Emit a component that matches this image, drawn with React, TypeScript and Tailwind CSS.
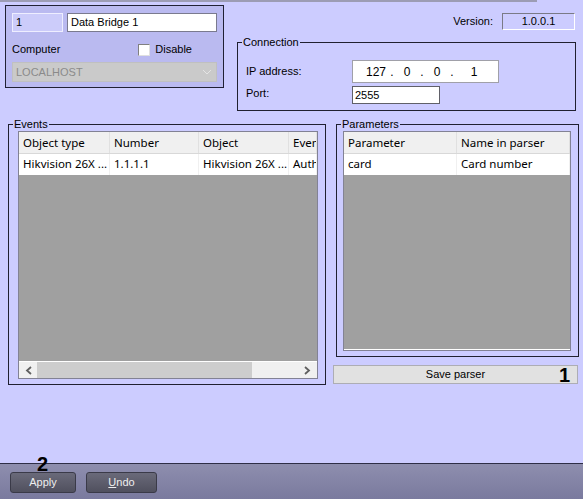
import React from "react";

const font = { fontFamily: '"Liberation Sans", Arial, sans-serif' };
const tableFont = { fontFamily: '"Noto Sans", "Open Sans", sans-serif' };

function Legend({ children }: { children: React.ReactNode }) {
  return (
    <span className="absolute -top-[8px] left-[4px] bg-[#ccccff] px-[1px] text-[11px] leading-[14px] text-black">
      {children}
    </span>
  );
}

function Chevron({ dir }: { dir: "left" | "right" }) {
  return (
    <svg width="8" height="9" viewBox="0 0 8 9" className="shrink-0">
      <polyline
        points={dir === "left" ? "6,1 2,4.5 6,8" : "2,1 6,4.5 2,8"}
        fill="none"
        stroke="#606060"
        strokeWidth="1.8"
      />
    </svg>
  );
}

function Grid({
  cols,
  header,
  row,
  scroll,
}: {
  cols: string[];
  header: string[];
  row: string[];
  scroll?: boolean;
}) {
  return (
    <div className="flex h-full flex-col border border-[#828294] bg-[#a0a0a0]" style={tableFont}>
      <div className="flex h-[22px] shrink-0 border-b border-[#d8d8d8] bg-[#f0f0f0]">
        {header.map((h, i) => (
          <div
            key={h}
            className={`${cols[i]} overflow-hidden whitespace-nowrap border-r border-[#e0e0e0] pl-[4px] text-[11.5px] leading-[21px] text-black`}
          >
            {h}
          </div>
        ))}
      </div>
      <div className="flex h-[21px] shrink-0 bg-white">
        {row.map((c, i) => (
          <div
            key={i}
            className={`${cols[i]} overflow-hidden whitespace-nowrap border-r border-[#f0f0f0] pl-[4px] text-[11.5px] leading-[20px] text-black`}
          >
            {c}
          </div>
        ))}
      </div>
      <div className="flex-1" />
      {scroll && (
        <div className="flex h-[17px] shrink-0 items-center border-t border-white bg-[#f0f0f0] px-[6px]">
          <Chevron dir="left" />
          <div className="ml-[4px] h-[16px] w-[215px] bg-[#cdcdcd]" />
          <div className="flex-1" />
          <Chevron dir="right" />
        </div>
      )}
      {!scroll && <div className="h-[1px] shrink-0 bg-white" />}
    </div>
  );
}

function Btn({ children }: { children: React.ReactNode }) {
  return (
    <div className="flex h-[21px] items-center justify-center rounded-[3px] border border-[#3a3a48] bg-gradient-to-b from-[#6a6a7a] to-[#50505e] text-[11px] text-[#eeeeee]">
      {children}
    </div>
  );
}

export default function App() {
  return (
    <div className="relative flex h-[499px] w-[583px] flex-col overflow-hidden bg-[#ccccff] text-black" style={font}>
      <div className="h-[2px] w-[537px] shrink-0 bg-[#9c9cb4]" />

      {/* top row */}
      <div className="mt-[3px] flex shrink-0 pl-[5px]">
        <div className="h-[83px] w-[219px] border border-[#202034] bg-[#babaf0] px-[6px] pt-[7px]">
          <div className="flex gap-[4px]">
            <div className="h-[19px] w-[51px] border border-[#eeeeff] bg-[#ccccfa] pl-[3px] text-[11px] leading-[17px]">1</div>
            <div className="h-[19px] w-[150px] border border-[#7a7a8e] bg-white pl-[3px] text-[11px] leading-[17px]">
              Data Bridge 1
            </div>
          </div>
          <div className="mt-[11px] flex h-[13px] items-center text-[11px]">
            <span>Computer</span>
            <div className="ml-[78px] h-[12px] w-[12px] border border-t-[#808080] border-l-[#808080] border-r-[#e0e0e0] border-b-[#e0e0e0] bg-white" />
            <span className="ml-[5px]">Disable</span>
          </div>
          <div className="mt-[6px] flex h-[20px] w-[205px] items-center justify-between border border-[#c0c0c0] bg-[#cacaca] pl-[3px] pr-[4px] text-[11px] text-[#8a8a8a]">
            <span>LOCALHOST</span>
            <svg width="10" height="6" viewBox="0 0 10 6">
              <polyline points="1,1 5,5 9,1" fill="none" stroke="#e4e4e4" strokeWidth="1" />
            </svg>
          </div>
        </div>

        <div className="ml-[13px] flex w-[340px] flex-col">
          <div className="mt-[8px] flex h-[17px] items-center justify-end pr-[2px] text-[11px]">
            <span>Version:</span>
            <div className="ml-[9px] h-[17px] w-[73px] border border-t-[#7a7a86] border-l-[#7a7a86] border-r-white border-b-white text-center leading-[14px]">
              1.0.0.1
            </div>
          </div>
          <div className="relative mt-[12px] h-[69px] w-[339px] border border-[#202030]">
            <Legend>Connection</Legend>
            <div className="flex h-full flex-col pl-[8px] pt-[17px] text-[11px]">
              <div className="flex items-center">
                <span className="w-[106px]">IP address:</span>
                <div className="flex h-[23px] w-[147px] items-center border border-[#a0a0a8] bg-white text-[12px]">
                  <span className="ml-[9px] w-[28px] text-center">127</span>
                  <span className="w-[4px] text-center">.</span>
                  <span className="w-[26px] text-center">0</span>
                  <span className="w-[4px] text-center">.</span>
                  <span className="w-[26px] text-center">0</span>
                  <span className="w-[4px] text-center">.</span>
                  <span className="w-[40px] text-center">1</span>
                </div>
              </div>
              <div className="mt-[3px] flex items-center">
                <span className="w-[106px] -translate-y-[2px]">Port:</span>
                <div className="h-[18px] w-[88px] border border-[#606068] bg-white pl-[2px] text-[11px] leading-[16px]">2555</div>
              </div>
            </div>
          </div>
        </div>
      </div>

      {/* middle row */}
      <div className="mt-[13px] flex shrink-0 pl-[8px]">
        <div className="relative h-[261px] w-[318px] border border-[#202030] pb-[5px] pl-[9px] pr-[7px] pt-[6px]">
          <Legend>Events</Legend>
          <Grid
            cols={["w-[91px] shrink-0", "w-[89px] shrink-0", "w-[90px] shrink-0", "flex-1 min-w-0"]}
            header={["Object type", "Number", "Object", "Event"]}
            row={["Hikvision 26X ...", "1.1.1.1", "Hikvision 26X ...", "Authorization"]}
            scroll
          />
        </div>

        <div className="ml-[10px] flex w-[243px] flex-col">
          <div className="relative h-[233px] border border-[#202030] pb-[5px] pl-[6px] pr-[7px] pt-[6px]">
            <Legend>Parameters</Legend>
            <Grid
              cols={["w-[113px] shrink-0", "flex-1 min-w-0"]}
              header={["Parameter", "Name in parser"]}
              row={["card", "Card number"]}
            />
          </div>
          <div className="relative -ml-[3px] mt-[8px] flex h-[19px] w-[245px] items-center justify-center border border-[#adadb4] bg-[#e1e1e1] text-[11px]">
            Save parser
            <span className="absolute right-[7px] top-[-1px] text-[20px] font-bold leading-[20px]">1</span>
          </div>
        </div>
      </div>

      <div className="flex-1" />

      {/* bottom bar */}
      <div className="relative flex h-[36px] shrink-0 gap-[10px] border-t border-[#2e2e46] bg-gradient-to-b from-[#8e8eae] to-[#7a7a9e] pl-[10px] pt-[8px]">
        <span className="absolute left-[37px] top-[-10px] text-[20px] font-bold leading-[20px]">2</span>
        <div className="w-[66px]">
          <Btn>Apply</Btn>
        </div>
        <div className="w-[71px]">
          <Btn>
            <span className="underline">U</span>ndo
          </Btn>
        </div>
      </div>
    </div>
  );
}
